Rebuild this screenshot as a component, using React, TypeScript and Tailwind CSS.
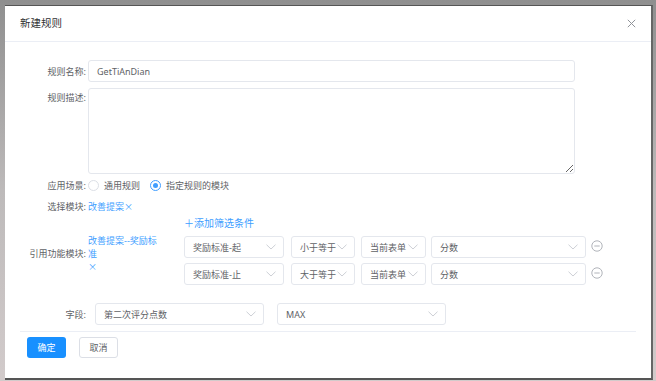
import React from 'react';

const font = { fontFamily: '"Noto Sans", "Noto Sans CJK SC", sans-serif' };

function Chevron() {
  return (
    <svg width="10" height="6" viewBox="0 0 10 6" fill="none" className="shrink-0">
      <path d="M0.5 0.7 L5 5 L9.5 0.7" stroke="#c0c4cc" strokeWidth="0.8" />
    </svg>
  );
}

function Select({ text, className }: { text: string; className: string }) {
  return (
    <div
      className={`h-[22px] flex items-center justify-between border border-[#e4e7ed] rounded-[3px] bg-white pl-[8px] pr-[7px] text-[#606266] ${className}`}
    >
      <span>{text}</span>
      <Chevron />
    </div>
  );
}

function MinusCircle() {
  return (
    <svg width="12" height="12" viewBox="0 0 12 12" fill="none" className="ml-[5px] -mt-[2px]">
      <circle cx="6" cy="6" r="5.2" stroke="#a8abb2" strokeWidth="0.9" />
      <path d="M3.3 6 H8.7" stroke="#a8abb2" strokeWidth="0.9" />
    </svg>
  );
}

function Label({ children, className = '' }: { children: React.ReactNode; className?: string }) {
  return <div className={`w-[83px] shrink-0 text-right pr-[2px] text-[#606266] ${className}`}>{children}</div>;
}

function FilterRow({ first, op }: { first: string; op: string }) {
  return (
    <div className="flex items-center">
      <Select text={first} className="w-[100px]" />
      <Select text={op} className="w-[64px] ml-[7px]" />
      <Select text="当前表单" className="w-[65px] ml-[6px]" />
      <Select text="分数" className="w-[155px] ml-[5px]" />
      <MinusCircle />
    </div>
  );
}

export default function App() {
  return (
    <div
      className="w-[656px] h-[381px] overflow-hidden bg-gradient-to-b from-[#8f8f8f] via-[#bdbaba] to-[#d2cbcb] pt-[5px] pl-[5px] text-[9px] leading-[13px]"
      style={font}
    >
      <div className="w-[648px] h-[375px] bg-white border-t border-t-[#555] border-r-2 border-r-[#666] border-b-2 border-b-[#555] flex flex-col">
        {/* header */}
        <div className="h-[36px] shrink-0 flex items-center justify-between pl-[15px] pr-[15px] border-b border-[#ebeef5]">
          <span className="text-[10.5px] text-[#303133]">新建规则</span>
          <svg width="9" height="9" viewBox="0 0 9 9" fill="none">
            <path d="M0.8 0.8 L8.2 8.2 M8.2 0.8 L0.8 8.2" stroke="#909399" strokeWidth="1" />
          </svg>
        </div>

        {/* body */}
        <div className="flex flex-col">
          <div className="flex items-center mt-[18px]">
            <Label>规则名称:</Label>
            <div className="w-[487px] h-[22px] border border-[#e4e7ed] rounded-[3px] flex items-center px-[8px] text-[#606266]">
              GetTiAnDian
            </div>
          </div>

          <div className="flex items-start mt-[6px]">
            <Label className="pt-[3px]">规则描述:</Label>
            <textarea className="w-[487px] h-[86px] border border-[#e4e7ed] rounded-[3px] outline-none" />
          </div>

          <div className="flex items-center mt-[2px] h-[18px]">
            <Label>应用场景:</Label>
            <span className="w-[11px] h-[11px] rounded-full border border-[#dcdfe6] bg-white" />
            <span className="ml-[5px] text-[#606266]">通用规则</span>
            <span className="ml-[10px] w-[11px] h-[11px] rounded-full border border-[#409eff] bg-white flex items-center justify-center">
              <span className="w-[5px] h-[5px] rounded-full bg-[#409eff]" />
            </span>
            <span className="ml-[5px] text-[#606266]">指定规则的模块</span>
          </div>

          <div className="flex items-center mt-[3px] h-[18px]">
            <Label>选择模块:</Label>
            <span className="text-[#409eff]">
              改善提案<span className="font-['Noto_Sans_CJK_SC']">×</span>
            </span>
          </div>

          <div className="flex items-center h-[16px] pl-[179px] text-[#409eff] text-[10px]">＋添加筛选条件</div>

          <div className="flex items-start mt-[5px]">
            <Label className="mt-[11px]">引用功能模块:</Label>
            <div className="w-[96px] shrink-0 -mt-[2px]">
              <div className="w-[74px] text-[#409eff]">
                改善提案--奖励标准
                <br />
                <span className="font-['Noto_Sans_CJK_SC']">×</span>
              </div>
            </div>
            <div className="flex flex-col gap-[5px]">
              <FilterRow first="奖励标准-起" op="小于等于" />
              <FilterRow first="奖励标准-止" op="大于等于" />
            </div>
          </div>

          <div className="flex items-center mt-[18px]">
            <Label>字段:</Label>
            <Select text="第二次评分点数" className="w-[169px] ml-[7px]" />
            <Select text="MAX" className="w-[169px] ml-[13px]" />
          </div>

          <div className="ml-[15px] w-[616px] mt-[6px] border-t border-[#ebeef5]" />

          <div className="flex items-center mt-[5px] pl-[22px]">
            <div className="w-[39px] h-[21px] rounded-[3px] bg-[#1890ff] text-white flex items-center justify-center">确定</div>
            <div className="w-[39px] h-[21px] ml-[13px] rounded-[3px] border border-[#dcdfe6] text-[#606266] flex items-center justify-center">
              取消
            </div>
          </div>
        </div>
      </div>
    </div>
  );
}
